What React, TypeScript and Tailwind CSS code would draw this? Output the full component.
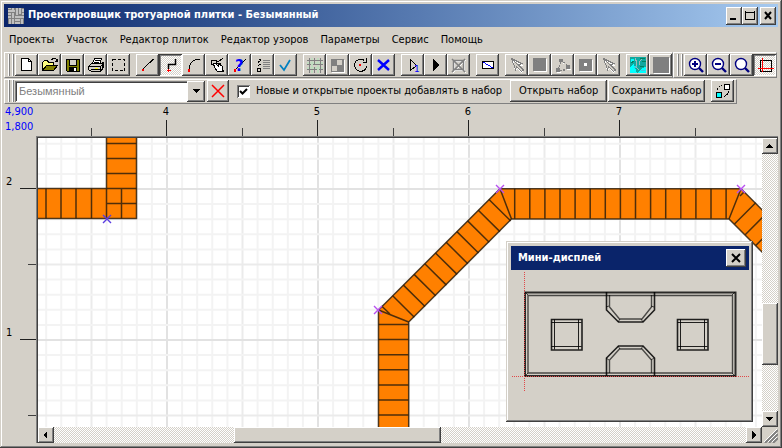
import React from "react";

const FONT = "font-['Tahoma','DejaVu_Sans_Condensed','DejaVu_Sans',sans-serif]";
const RAISED = "bg-[#d4d0c8] shadow-[inset_-1px_-1px_#404040,inset_1px_1px_#ffffff,inset_-2px_-2px_#808080]";
const PRESSED = "shadow-[inset_1px_1px_#404040,inset_-1px_-1px_#ffffff,inset_2px_2px_#808080]";
const DITHER = "bg-[conic-gradient(#fff_25%,#d4d0c8_0_50%,#fff_0_75%,#d4d0c8_0)] bg-[length:2px_2px]";

type Tool = { label: string; pressed?: boolean; icon: React.ReactNode };

function ToolButton({ tool }: { tool: Tool }) {
  return (
    <button
      type="button"
      aria-label={tool.label}
      aria-pressed={tool.pressed}
      className={`h-[22px] w-[23px] shrink-0 ${tool.pressed ? `${DITHER} ${PRESSED}` : RAISED}`}
    >
      <svg viewBox="0 0 23 22" className="block h-[22px] w-[23px]" fill="none" stroke="#000" shapeRendering="crispEdges">
        {tool.icon}
      </svg>
    </button>
  );
}

const arrowGray = (
  <>
    <path d="M7.5 5.5L17.5 11.5H14.5L18.5 16.5L16.5 18.5L12.5 14.5L10.5 16.5Z" stroke="#fff" />
    <path d="M6.5 4.5L16.5 9.5L13.5 11L18.5 16L16.5 17.5L11.5 12.5L10.5 15.5Z" stroke="#808080" />
    <path d="M6.5 4.5L14 12" stroke="#808080" />
  </>
);

const lens = (inner: React.ReactNode) => (
  <g shapeRendering="auto">
    <circle cx="11" cy="10" r="5.500" fill="#fff" stroke="#000080" strokeWidth="1.4" />
    <path d="M15 14L19 18" stroke="#000080" strokeWidth="2.4" />
    {inner}
  </g>
);

const groups: Tool[][] = [
  [
    {
      label: "Новый",
      icon: (
        <>
          <path d="M6.5 4.5H13.5L16.5 7.5V16.5H6.5Z" fill="#fff" />
          <path d="M13.5 4.5V7.5H16.5" />
        </>
      ),
    },
    {
      label: "Открыть",
      icon: (
        <>
          <path d="M4.5 16.5V8.5L6.5 6.5H9.5L10.5 8.5H15.5V11.5" fill="#ffff80" />
          <path d="M4.5 16.5L8.5 11.5H19.5L15.5 16.5Z" fill="#808000" />
          <path d="M13.5 5.5L15.5 4.5H17.5L19.5 7.5M17 7.5H20M19.5 5V8" />
        </>
      ),
    },
    {
      label: "Сохранить",
      icon: (
        <>
          <path d="M5.5 5.5H18.5V17.5H6.5L5.5 16.5Z" fill="#808000" />
          <path d="M8.5 5.5H15.5V11.5H8.5Z" fill="#d4d0c8" />
          <path d="M8 13H16V17H8Z" fill="#000" stroke="none" />
          <path d="M13 14H15V17H13Z" fill="#fff" stroke="none" />
        </>
      ),
    },
    {
      label: "Печать",
      icon: (
        <>
          <path d="M8.5 9.5L10.5 4.5H17.5L15.5 10.5" fill="#fff" />
          <path d="M11 6.5H16M10 8.5H15" />
          <path d="M4.5 12.5L7.5 9.5H17.5L19.5 8.5V13.5L16.5 17.5H7.5L4.5 15.5Z" fill="#d4d0c8" />
          <path d="M4.5 12.5H16.5V17.5M16.5 12.5L19.5 9.5M7 15.5H16M18.5 11V15" />
          <path d="M11 14.5H14" stroke="#ffff00" />
        </>
      ),
    },
    { label: "Выделить", icon: <path d="M5.5 5.5H17.5V16.5H5.5Z" strokeDasharray="3 2" /> },
  ],
  [
    {
      label: "Линия",
      icon: (
        <>
          <path d="M7 15L17.5 5" />
          <path d="M6 15H8V17H6Z" fill="#f00" stroke="none" />
        </>
      ),
    },
    {
      label: "Ломаная",
      pressed: true,
      icon: (
        <>
          <path d="M9.5 15V10.5H16.5V5" strokeWidth="1.500" shapeRendering="auto" />
          <path d="M8 16.5H12M9.5 15V18" stroke="#f00" />
        </>
      ),
    },
    {
      label: "Дуга",
      icon: (
        <>
          <path d="M7.5 15V12.5L8.5 9.5L10.5 7.5L13.5 5.5H18" />
          <path d="M6 15H8V18H6Z" fill="#f00" stroke="none" />
        </>
      ),
    },
    {
      label: "Правка узла",
      icon: (
        <>
          <path d="M12 8L18 4.5M12 10L16 9.5" />
          <path d="M6.5 6.5H11.5V10.5H6.5Z" />
          <path d="M8.5 9.5L10.5 9.5L13.5 12V9.5L17.5 12.5V15.5L18.5 17.5H12.5L9.5 13.5Z" fill="#fff" />
        </>
      ),
    },
    {
      label: "Справка по линии",
      icon: (
        <>
          <path d="M8 15L18 5" strokeDasharray="3 1" />
          <path d="M6 15H8V18H6Z" fill="#f00" stroke="none" />
          <text x="7" y="17" fontSize="15" fontWeight="700" fill="#0000ff" stroke="none" className="font-['DejaVu_Sans',sans-serif]">
            ?
          </text>
        </>
      ),
    },
    {
      label: "Список",
      icon: (
        <>
          <path d="M8 5.5H10M7 8.5L10 6M7 11.5L10 10M6.5 14.5H9.5V17.5H6.5Z" />
          <path d="M12 6.5H19M12 8.5H19M12 10.5H19M12 12.5H19M12 14.5H19" stroke="#808080" />
        </>
      ),
    },
    { label: "Применить", icon: <path d="M6 11L10 16L16 6" stroke="#0080c0" strokeWidth="1.800" shapeRendering="auto" /> },
  ],
  [
    {
      label: "Сетка",
      icon: (
        <>
          <path d="M4 8.5H20M4 13.5H20M8.5 4V19M14.5 4V19" stroke="#c0dcc0" strokeWidth="2" />
          <path d="M4 6.5H20M4 10.5H8M10 10.5H20M4 15.5H14M16 15.5H20M6.5 4V19M11.5 4V11M11.5 13V19M17.5 4V19" stroke="#808080" />
        </>
      ),
    },
    {
      label: "Шахматы",
      icon: (
        <>
          <path d="M6 6H19V19H6Z" fill="#fff" stroke="none" />
          <path d="M5 5H18V18H5Z" fill="#808080" stroke="none" />
          <path d="M11 6H16V11H11ZM6 12H11V17H6Z" fill="#d4d0c8" stroke="none" />
        </>
      ),
    },
    {
      label: "Повернуть",
      icon: (
        <>
          <path d="M15.5 6.5L13.5 5.5H9.5L6.5 7.5L5.5 10.5V12.5L7.5 15.5L10.5 17.5H12.5L16.5 15.5L17.5 12.5M17.5 4V8.5H13.5" />
          <path d="M10 10H12V12H10Z" fill="#f00" stroke="none" />
        </>
      ),
    },
    { label: "Удалить", icon: <path d="M6 6L17 16M17 6L6 16" stroke="#0000ff" strokeWidth="2.4" shapeRendering="auto" /> },
  ],
  [
    {
      label: "Шаг",
      icon: (
        <>
          <path d="M9.5 5.5V16.5L15.5 11.5Z" />
          <text x="13" y="18" fontSize="9" fill="#0000ff" stroke="none" className="font-['DejaVu_Sans',sans-serif]">
            1
          </text>
        </>
      ),
    },
    { label: "Пуск", icon: <path d="M9 5V17L16 11Z" fill="#000" stroke="none" /> },
    {
      label: "Стоп",
      icon: (
        <>
          <path d="M7.5 7.5H17.5V16.5H7.5ZM6 6L19 19M19 6L6 19" stroke="#fff" />
          <path d="M6.5 6.5H16.5V15.5H6.5ZM5 5L18 18M18 5L5 18" stroke="#808080" strokeWidth="1.500" shapeRendering="auto" />
        </>
      ),
    },
  ],
  [
    {
      label: "Диагональ",
      icon: (
        <>
          <path d="M6.5 7.5H17.5V14.5H6.5Z" fill="#fff" />
          <path d="M7 8L17 14" stroke="#0000ff" />
        </>
      ),
    },
  ],
  [
    { label: "Выбор", icon: arrowGray },
    {
      label: "Плитка",
      icon: (
        <>
          <path d="M6 5H19V18H6Z" fill="#fff" stroke="none" />
          <path d="M5 4H18V17H5Z" fill="#808080" stroke="none" />
        </>
      ),
    },
    {
      label: "Узлы",
      icon: (
        <>
          <path d="M10 8L7 15M12 8L18 12M9 16H13" stroke="#808080" strokeDasharray="2 1" />
          <path d="M8 5H12V8H8ZM5 14H9V18H5ZM15 11H19V15H15ZM12 15H14V17H12Z" fill="#808080" stroke="none" />
          <path d="M12 9H13M6 18.5H10M16 15.5H20" stroke="#fff" />
        </>
      ),
    },
    {
      label: "Отверстие",
      icon: (
        <>
          <path d="M6 6H19V18H6Z" fill="#fff" stroke="none" />
          <path d="M5 5H18V17H5Z" fill="#808080" stroke="none" />
          <path d="M10 9H13V12H10Z" fill="#fff" stroke="none" />
        </>
      ),
    },
    { label: "Указатель", icon: arrowGray },
  ],
  [
    {
      label: "Текстура",
      icon: (
        <>
          <path d="M4 3H20V19H4Z" fill="#10a8a0" stroke="none" />
          <path d="M4 13L8 10L11 19H4ZM12 19L16 14L20 13V19ZM5 5H8V8H5Z" fill="#00ffff" stroke="none" />
          <path d="M9 4L11 9L10 13L13 16M16 5L13 8L14 11" stroke="#a0b8b8" />
          <path d="M14 4H19M16 7H20M5 9L8 7M14 12H18" stroke="#008060" />
          <path d="M8 14L11 12M15 16H19" stroke="#40c8e0" />
        </>
      ),
    },
    {
      label: "Цвет",
      icon: (
        <>
          <path d="M5 4H21V20H5Z" fill="#fff" stroke="none" />
          <path d="M4 3H20V19H4Z" fill="#808080" stroke="none" />
        </>
      ),
    },
  ],
];

const zoomTools: Tool[] = [
  { label: "Увеличить", icon: lens(<path d="M8 10H14M11 7V13" stroke="#000080" strokeWidth="2" />) },
  { label: "Уменьшить", icon: lens(<path d="M8 10H14" stroke="#000080" strokeWidth="2" />) },
  { label: "Масштаб", icon: lens(null) },
  {
    label: "Показать границы",
    pressed: true,
    icon: (
      <>
        <path d="M7.5 6.5H18.5V17.5H7.5Z" />
        <path d="M5 14.5H21M9.5 4V18" stroke="#f00" />
      </>
    ),
  },
];

const swapTool: Tool = {
  label: "Поменять местами",
  icon: (
    <>
      <path d="M13.5 4.5H18.5V9.5H13.5Z" fill="#fff" />
      <path d="M5.5 12.5H10.5V17.5H5.5Z" fill="#00ffff" />
      <path d="M6.5 10V8.5L8.5 6.5L11 5M13 16.5L15.5 15L17.5 12.5V11" strokeDasharray="2 1" />
    </>
  ),
};

function Grip() {
  return (
    <div className="flex w-[7px] shrink-0 gap-px self-stretch">
      <div className="w-[2px] border-r border-l border-r-[#808080] border-l-white" />
      <div className="ml-px w-[2px] border-r border-l border-r-[#808080] border-l-white" />
    </div>
  );
}

const BAND = "flex shrink-0 border border-t-white border-r-[#808080] border-b-[#808080] border-l-white pl-[3px]";

function WeaveIcon() {
  return (
    <svg viewBox="0 0 16 16" className="h-4 w-4" shapeRendering="crispEdges">
      <path d="M0 0H16V16H0Z" fill="#808080" />
      <path
        d="M0 2H7V4H0ZM0 5H3V7H0ZM8 0H10V7H8ZM11 0H13V6H11ZM14 1H16V4H14ZM4 5H6V10H4ZM0 8H3V10H0ZM1 11H3V16H1ZM4 11H6V16H4ZM7 8H16V10H7ZM7 11H12V13H7ZM13 11H15V16H13ZM7 14H12V16H7ZM4 0H6V2H4ZM0 0H3V1H0ZM14 5H16V7H14Z"
        fill="#c0c0c0"
      />
    </svg>
  );
}

function CaptionButton({ label, path }: { label: string; path: React.ReactNode }) {
  return (
    <button type="button" aria-label={label} className={`h-[18px] w-4 shrink-0 ${RAISED}`}>
      <svg viewBox="0 0 16 18" className="block h-[18px] w-4" fill="none" stroke="#000" shapeRendering="crispEdges">
        {path}
      </svg>
    </button>
  );
}

const closeGlyph = <path d="M5 5L11 12M11 5L5 12" strokeWidth="2" shapeRendering="auto" />;

// Distance in pixels between two ruler units on the sheet.
const UNIT = 151;
const range = (n: number) => Array.from({ length: n }, (_, i) => i);

function TopRuler() {
  return (
    <svg className="mr-4 h-8 min-w-0 flex-1 overflow-hidden" shapeRendering="crispEdges">
      {range(4).map((i) => {
        const x = 130 + i * UNIT;
        return (
          <g key={i}>
            <text x={x} y="11" textAnchor="middle" fontSize="11">
              {i + 4}
            </text>
            <rect x={x} y="16" width="1" height="16" fill="#202020" />
          </g>
        );
      })}
      {range(5).map((i) => (
        <rect key={i} x={55 + i * UNIT} y="24" width="1" height="8" fill="#404040" />
      ))}
    </svg>
  );
}

function SideRuler() {
  return (
    <svg className="w-8 shrink-0 self-stretch overflow-hidden" shapeRendering="crispEdges">
      {range(2).map((i) => {
        const y = 52 + i * UNIT;
        return (
          <g key={i}>
            <text x="2" y={y - 3} fontSize="11">
              {2 - i}
            </text>
            <rect x="16" y={y} width="16" height="1" fill="#202020" />
            <rect x="24" y={y + 76} width="8" height="1" fill="#404040" />
          </g>
        );
      })}
    </svg>
  );
}

// Plan drawing; coordinates are window pixels shifted to the sheet's corner.
function Plan() {
  const step = UNIT / 10;
  const tone = (k: number) => (k % 10 === 0 ? "#e2e2e2" : k % 5 === 0 ? "#ebebeb" : "#f3f3f3");
  const cross = (x: number, y: number, color: string) => (
    <path key={`${x}-${y}`} d={`M${x - 4} ${y - 4}l8 8m0-8l-8 8`} stroke={color} strokeWidth="1.4" />
  );
  return (
    <svg className="block h-full w-full" fill="none">
      <g transform="translate(-38 -138)">
        {range(120).map((i) => {
          const k = i - 8;
          const x = 167 + k * step;
          return <path key={i} d={`M${x} 138V1400`} stroke={tone(k + 10)} strokeWidth="2" />;
        })}
        {range(80).map((i) => {
          const k = i - 3;
          const y = 189 + k * step;
          return <path key={i} d={`M38 ${y}H2000`} stroke={tone(k + 10)} strokeWidth="2" />;
        })}
        <g fill="#ff8000" stroke="#30200c" strokeWidth="1.5" strokeOpacity="0.85">
          <path d="M36 188.5H106.5V130H136.5V218.5H36Z" />
          <path d="M46 188.5v30M61 188.5v30M76 188.5v30M91.5 188.5v30M106.5 188.5v30M106.5 143.5h30M106.5 158.5h30M106.5 173.5h30M106.5 188.5h30M106.5 203.5h30M121.5 188.5v30" />
          <path d="M378.5 440V310L500 188.7H741L800 247.7V290L729 219H511.5L408.7 322V440Z" />
          <path d="M378.5 310L408.7 322M500 188.7L511.5 219M741 188.7L729 219M381.6 306L390 314M740 196L744 192" />
          <path d={range(8).map((i) => `M378.5 ${324.5 + i * step}h30`).join("")} />
          <path d={range(15).map((i) => `M${514.7 + i * step} 188.7v30`).join("")} />
          <path d={range(10).map((i) => `M${489 - i * 10.7} ${199.5 + i * 10.7}l21.6 21.4`).join("")} />
          <path d={range(5).map((i) => `M${734.5 + i * 10.7} ${224 + i * 10.7}l21.2-21.2`).join("")} />
        </g>
        {cross(107, 219, "#5a3ce0")}
        {cross(378, 310, "#b850f0")}
        {cross(500, 189, "#b850f0")}
        {cross(741, 189, "#b850f0")}
      </g>
    </svg>
  );
}

function MiniDisplay() {
  return (
    <section
      aria-label="Мини-дисплей"
      className="absolute right-[9px] bottom-[5px] flex h-[181px] w-[247px] flex-col bg-[#d4d0c8] p-[5px] pr-[4px] shadow-[inset_-1px_-1px_#404040,inset_1px_1px_#d4d0c8,inset_-2px_-2px_#808080,inset_2px_2px_#ffffff]"
    >
      <div className="flex h-6 shrink-0 items-center justify-between bg-[#0a246a] pr-[3px] pl-[7px] text-white">
        <h2 className="text-[11px] font-bold">Мини-дисплей</h2>
        <button type="button" aria-label="Закрыть" className={`h-[18px] w-5 ${RAISED}`}>
          <svg viewBox="0 0 20 18" className="block h-[18px] w-5" fill="none" stroke="#000">
            <path d="M6 5L14 13M14 5L6 13" strokeWidth="2" />
          </svg>
        </button>
      </div>
      <svg viewBox="511 270 238 147" className="h-[147px] w-[238px]" fill="none" stroke="#000">
        <path d="M525 292.5H735.5V376H525Z" strokeWidth="2" strokeOpacity="0.8" />
        <g stroke="#000" strokeOpacity="0.65">
          <path d="M528 295.5H732.5V373H528Z" strokeWidth="1.4" />
          <path d="M525 292L528 295M735 292L732 295M525 376L528 373M735 376L732 373" />
          <path d="M609.5 295V307L619.5 319H642L651.5 307V295M609.5 373V360L619.5 349H642L651.5 360V373" strokeWidth="1.4" />
          <path d="M618 322L620 319M643 322L641 319M618 346L620 349M643 346L641 349M606 307L609 306M654 307L651 306M606 358L609 360M654 358L651 360" />
        </g>
        <path d="M606.5 292V310L618.5 322H643L654.5 310V292M606.5 376V358L618.5 346H643L654.5 358V376" strokeWidth="1.6" strokeOpacity="0.85" />
        {[551, 677].map((x) => (
          <g key={x} strokeOpacity="0.85">
            <path d={`M${x + 0.5} 319.5h30.5v30.5h-30.5Z`} strokeWidth="1.6" />
            <path d={`M${x + 3.5} 319.5v30M${x + 27.5} 319.5v30M${x + 0.5} 322.5h30M${x + 0.5} 346.5h30`} />
          </g>
        ))}
        <path d="M524.5 272V391M510 376.5H749" stroke="#e04848" strokeDasharray="1 1" shapeRendering="crispEdges" />
      </svg>
    </section>
  );
}

function ScrollArrow({ label, points }: { label: string; points: string }) {
  return (
    <button type="button" aria-label={label} className={`h-4 w-4 shrink-0 ${RAISED}`}>
      <svg viewBox="0 0 16 16" className="block h-4 w-4" shapeRendering="crispEdges">
        <polygon points={points} fill="#000" />
      </svg>
    </button>
  );
}

const menus = ["Проекты", "Участок", "Редактор плиток", "Редактор узоров", "Параметры", "Сервис", "Помощь"];

export default function App() {
  return (
    <main
      className={`flex h-screen w-full flex-col overflow-hidden bg-[#d4d0c8] px-1 pt-1 text-[11px] text-black shadow-[inset_-1px_-1px_#404040,inset_1px_1px_#d4d0c8,inset_-2px_-2px_#808080,inset_2px_2px_#ffffff] ${FONT}`}
    >
      <header className="flex h-[23px] shrink-0 items-center bg-linear-to-r from-[#0a246a] to-[#a6caf0] pr-[2px] pl-1">
        <WeaveIcon />
        <h1 className="ml-1 min-w-0 flex-1 truncate text-[11px] font-bold text-white">
          Проектировщик тротуарной плитки - Безымянный
        </h1>
        <CaptionButton label="Свернуть" path={<path d="M4 12H10" strokeWidth="2" />} />
        <CaptionButton label="Развернуть" path={<path d="M3.5 4V12.5H12.5V4M3 5H13" strokeWidth="1" />} />
        <div className="w-[2px]" />
        <CaptionButton label="Закрыть" path={closeGlyph} />
      </header>

      <nav className="flex h-[25px] shrink-0 items-center pt-px">
        {menus.map((m) => (
          <button key={m} type="button" className="pr-[7px] pl-[5px] whitespace-nowrap">
            {m}
          </button>
        ))}
      </nav>

      <div className="flex shrink-0">
        <div className={`${BAND} py-px`}>
          <Grip />
          <div className="flex gap-[6px]">
            {groups.map((g, i) => (
              <div key={i} className="flex">
                {g.map((t) => (
                  <ToolButton key={t.label} tool={t} />
                ))}
              </div>
            ))}
          </div>
        </div>
        <div className={`${BAND} py-px`}>
          <Grip />
          {zoomTools.map((t) => (
            <ToolButton key={t.label} tool={t} />
          ))}
        </div>
      </div>

      <div className="mt-px flex shrink-0">
        <div className={`${BAND} items-center pr-[2px] pb-px`}>
          <Grip />
          <div className="relative">
            <select
              aria-label="Проект"
              className="block h-[21px] w-[190px] appearance-none bg-white pl-1 font-['Liberation_Sans',sans-serif] text-[11px] text-[#808080] shadow-[inset_1px_1px_#808080,inset_-1px_-1px_#ffffff,inset_2px_2px_#404040]"
            >
              <option>Безымянный</option>
            </select>
            <span className={`pointer-events-none absolute top-0 right-0 flex h-[21px] w-[18px] items-center justify-center ${RAISED}`}>
              <svg viewBox="0 0 7 4" className="h-1 w-[7px]" shapeRendering="crispEdges">
                <polygon points="0,0 7,0 3.5,4" />
              </svg>
            </span>
          </div>
          <button type="button" aria-label="Удалить из набора" className={`ml-[2px] h-[22px] w-[22px] ${RAISED}`}>
            <svg viewBox="0 0 22 22" className="block h-[22px] w-[22px]" stroke="#ff0000" strokeWidth="1.5">
              <path d="M5 5L17 17M17 5L5 17" />
            </svg>
          </button>
          <label className="ml-2 flex items-center gap-[6px] whitespace-nowrap">
            <span className="relative flex h-[13px] w-[13px]">
              <input
                type="checkbox"
                defaultChecked
                className="peer h-[13px] w-[13px] appearance-none bg-white shadow-[inset_1px_1px_#808080,inset_-1px_-1px_#ffffff,inset_2px_2px_#404040]"
              />
              <svg viewBox="0 0 13 13" className="pointer-events-none absolute inset-0 hidden peer-checked:block" fill="none" stroke="#000" strokeWidth="2">
                <path d="M3 6L5.500 8.500L10 4" />
              </svg>
            </span>
            Новые и открытые проекты добавлять в набор
          </label>
          <button type="button" className={`ml-2 h-[22px] w-[97px] whitespace-nowrap ${RAISED}`}>
            Открыть набор
          </button>
          <button type="button" className={`ml-px h-[22px] w-[97px] whitespace-nowrap ${RAISED}`}>
            Сохранить набор
          </button>
          <div className="ml-[6px] flex">
            <ToolButton tool={swapTool} />
          </div>
        </div>
      </div>

      <div className="flex h-8 shrink-0">
        <div className="w-8 shrink-0 pl-px leading-[15px] text-[#0000ff]">
          <div>4,900</div>
          <div>1,800</div>
        </div>
        <TopRuler />
      </div>

      <div className="flex min-h-0 flex-1">
        <SideRuler />
        <div className="flex min-w-0 flex-1 flex-col border-t border-l border-[#808080]">
          <div className="flex min-h-0 flex-1 flex-col border-t border-l border-[#404040]">
            <div className="flex min-h-0 flex-1">
              <div className="relative min-w-0 flex-1 overflow-hidden bg-white">
                <Plan />
                <MiniDisplay />
              </div>
              <div className={`flex w-4 shrink-0 flex-col ${DITHER}`}>
                <ScrollArrow label="Вверх" points="4,10 11,10 7.5,6" />
                <div className="grow-[149]" />
                <div className={`grow-[62] ${RAISED}`} />
                <div className="grow-[46]" />
                <ScrollArrow label="Вниз" points="4,6 11,6 7.5,10" />
              </div>
            </div>
            <div className="flex h-4 shrink-0">
              <div className={`flex min-w-0 flex-1 ${DITHER}`}>
                <ScrollArrow label="Влево" points="9,4 9,12 5,8" />
                <div className="grow-[180]" />
                <div className={`grow-[207] ${RAISED}`} />
                <div className="grow-[305]" />
                <ScrollArrow label="Вправо" points="6,4 6,12 10,8" />
              </div>
              <svg viewBox="0 0 16 16" className="h-4 w-4 shrink-0">
                <path d="M3 16L16 3M7 16L16 7M11 16L16 11" stroke="#808080" strokeWidth="2" />
                <path d="M2 15L15 2M6 15L15 6M10 15L15 10" stroke="#fff" />
              </svg>
            </div>
          </div>
        </div>
      </div>
      <div className="h-[5px] shrink-0" />
    </main>
  );
}
